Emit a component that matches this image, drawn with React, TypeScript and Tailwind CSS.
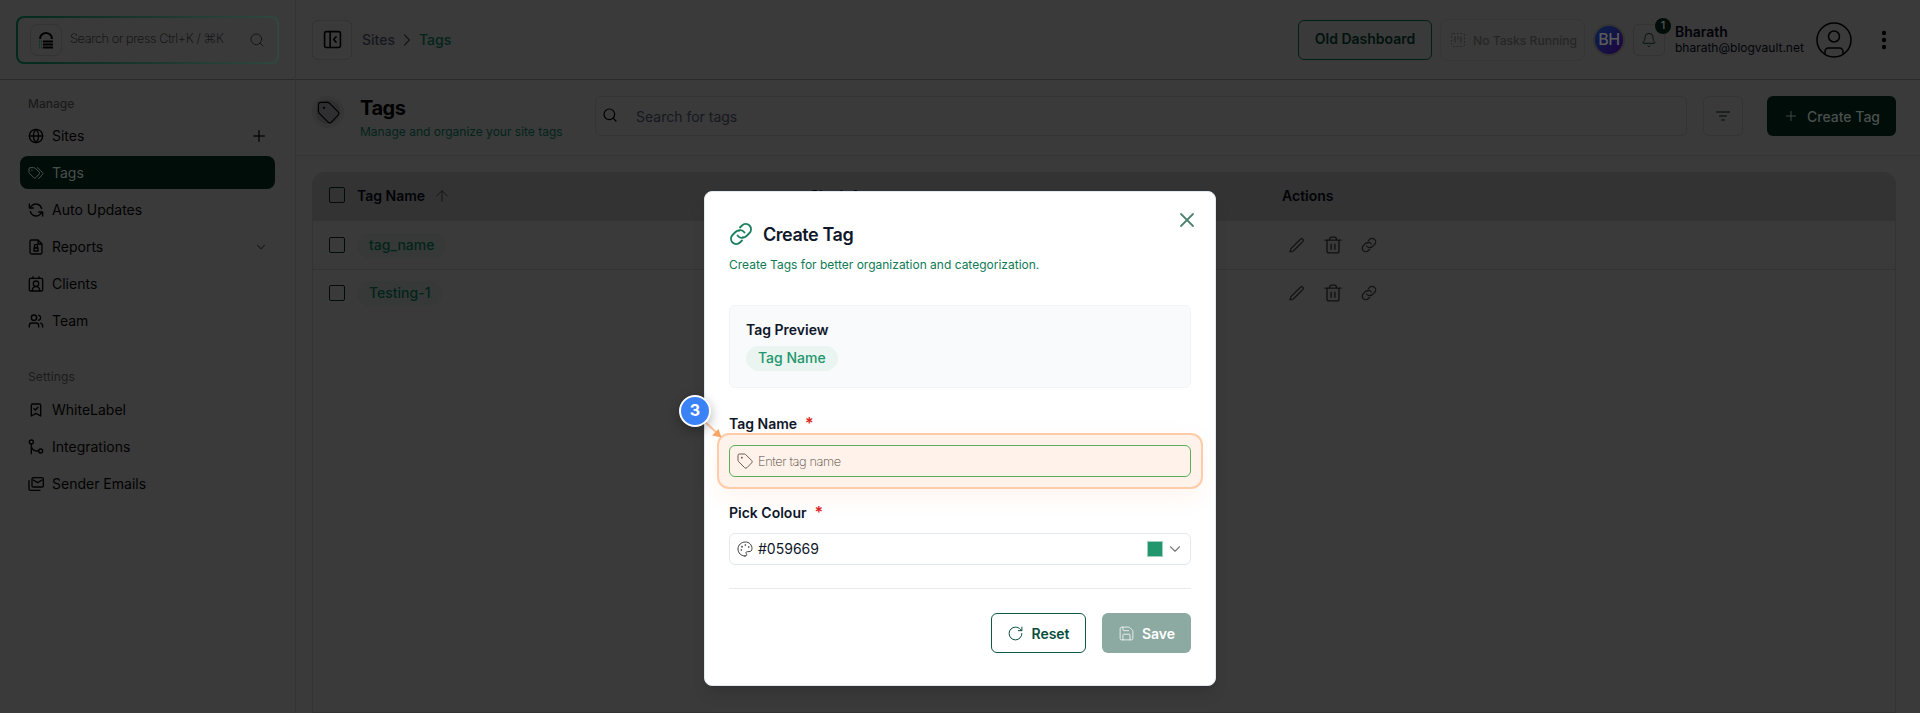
import type { ReactNode } from "react";
import {
  ArrowUp,
  Bell,
  BookmarkCheck,
  ChevronDown,
  ChevronRight,
  Globe,
  Plus,
  RotateCw,
  Save,
  Search,
  Users,
  X,
} from "lucide-react";

type IconProps = { size?: number; className?: string; strokeWidth?: number };

function Svg({ size = 16, className, strokeWidth = 2, children }: IconProps & { children: ReactNode }) {
  return (
    <svg
      width={size}
      height={size}
      viewBox="0 0 24 24"
      fill="none"
      stroke="currentColor"
      strokeWidth={strokeWidth}
      strokeLinecap="round"
      strokeLinejoin="round"
      className={className}
    >
      {children}
    </svg>
  );
}

const TagIcon = (props: IconProps) => (
  <Svg {...props}>
    <path d="M1.500 3.500a2 2 0 0 1 2-2H11a3 3 0 0 1 2 .8l9 9a2.500 2.500 0 0 1 0 3.500L15 22a2.500 2.500 0 0 1-3.500 0l-9-9a3 3 0 0 1-1-2z" />
    <path d="M6.500 7h1.500M7.250 6.250v1.500" />
  </Svg>
);

const TagsIcon = (props: IconProps) => (
  <Svg {...props}>
    <path d="M1.500 5.500A1.500 1.500 0 0 1 3 4h5.500a3 3 0 0 1 2 .8l6.500 6a1.800 1.800 0 0 1 0 2.600l-5.500 5.800a1.800 1.800 0 0 1-2.600 0l-6.500-6.500a3 3 0 0 1-.9-2z" />
    <path d="m14 4 8 7.500a1.800 1.800 0 0 1 0 2.500l-6 6.500M5.500 8h.6" />
  </Svg>
);

const LinkIcon = (props: IconProps) => (
  <Svg {...props}>
    <path d="M10.500 8.500a5 5 0 0 0-4 1.500l-3 3a5 5 0 0 0 7.500 7.500l2-2" />
    <path d="M13.500 15.500a5 5 0 0 0 4-1.500l3-3A5 5 0 0 0 13 3.500l-2 2" />
    <path d="M8.500 13.500c1.500 2 4 2.600 5.500 2M15.500 10.500c-1.500-2-4-2.600-5.500-2" />
  </Svg>
);

const PencilIcon = (props: IconProps) => (
  <Svg {...props}>
    <path d="M3 17.500 17.500 3a2.500 2.500 0 0 1 3.500 3.500L6.500 21 1.500 22.500z" />
  </Svg>
);

const TrashIcon = (props: IconProps) => (
  <Svg {...props}>
    <path d="M1.500 5.500h21M4 5.500V20a2.500 2.500 0 0 0 2.500 2.500h11A2.500 2.500 0 0 0 20 20V5.500M7.500 5.500V4A2.500 2.500 0 0 1 10 1.500h4A2.500 2.500 0 0 1 16.500 4v1.500M9.500 11v6.500M14.500 11v6.500" />
  </Svg>
);

const SyncIcon = (props: IconProps) => (
  <Svg {...props}>
    <path d="M2 3v6h6M22 21v-6h-6M3.500 14a9 9 0 0 0 15 4.500L22 15M20.500 10a9 9 0 0 0-15-4.500L2 9" />
  </Svg>
);

const ReportIcon = (props: IconProps) => (
  <Svg {...props}>
    <path d="M5 1.500h10l6 6V20a2.500 2.500 0 0 1-2.500 2.500h-13A2.500 2.500 0 0 1 3 20V4a2.500 2.500 0 0 1 2-2.500zM15 2v5.500h5.500" />
    <circle cx="12" cy="10.500" r="2.500" />
    <path d="M9 13.500h6V18H9z" />
  </Svg>
);

const ClientIcon = (props: IconProps) => (
  <Svg {...props}>
    <rect x="2" y="3.500" width="20" height="19" rx="2" />
    <path d="M7.500 1v2.500M16.500 1v2.500M6.500 22c0-4 2-6 5.500-6s5.500 2 5.500 6" />
    <circle cx="12" cy="11.500" r="4" />
  </Svg>
);

const BranchIcon = (props: IconProps) => (
  <Svg {...props}>
    <circle cx="5" cy="4.500" r="3" />
    <circle cx="19" cy="18" r="3" />
    <path d="M5 7.500V22M5 10c0 5 4 8 11 8" />
  </Svg>
);

const MailsIcon = (props: IconProps) => (
  <Svg {...props}>
    <rect x="6" y="2.500" width="17" height="14" rx="2" />
    <path d="m8 6 6.500 4L21 6M1.500 7v12A2.500 2.500 0 0 0 4 21.500h14" />
  </Svg>
);

const PaletteIcon = (props: IconProps) => (
  <Svg {...props}>
    <path d="M12 22.500C6 22.500 1.500 18 1.500 12S6.500 1.500 12.500 1.500 22.500 6 22.500 11.500c0 3-2 4.500-4.500 4.500h-2.500c-2 0-2.500 1.500-1.500 3s1 3.500-2 3.500z" />
    <path d="M6.500 13.500h.1M7.500 8.500h.1M12.500 6h.1M17.500 9h.1" strokeWidth={2.5} />
  </Svg>
);

const PanelIcon = (props: IconProps) => (
  <Svg {...props}>
    <rect x="2" y="2" width="20" height="20" rx="2" />
    <path d="M9 2v20M16.500 8.500 13.500 12l3 3.500" />
  </Svg>
);

function NavItem({ icon, label, active, right }: { icon: ReactNode; label: string; active?: boolean; right?: ReactNode }) {
  return (
    <div
      className={`flex h-[33px] items-center rounded-lg pr-[7px] pl-2 text-sm ${
        active ? "bg-[#010d09] text-[#4b504e]" : "text-[#020202]"
      }`}
    >
      <span className="flex w-6 shrink-0 items-center">{icon}</span>
      <span className="flex-1">{label}</span>
      {right}
    </div>
  );
}

function Sidebar() {
  return (
    <aside className="flex w-[296px] shrink-0 flex-col border-r border-[#333]">
      <div className="h-20 border-b border-[#2a2a2a] px-4 pt-4">
        <div className="h-12 w-[263px] rounded-lg bg-linear-to-r from-[#03281c] to-[#30483f] p-0.5">
          <div className="flex h-full items-center rounded-md bg-[#3a3a3a] pr-3 pl-3">
            <div className="flex size-8 items-center justify-center rounded-lg border border-[#333]">
              <svg width="14" height="17" viewBox="0 0 14 17" fill="none">
                <path d="M1.200 7V6a5.800 5 0 0 1 11.600 0v1" stroke="#000" strokeWidth="2" />
                <path d="M4 9.500h10M4 12.500h10M4 15.500h10" stroke="#000" strokeWidth="2" />
                <path d="M0 9.500h3M0 12.500h3M0 15.500h3" stroke="#0b3527" strokeWidth="2" strokeDasharray="1 1" />
              </svg>
            </div>
            <span className="ml-2 flex-1 pb-0.5 text-[12.800px] font-extralight tracking-[-0.031em] whitespace-nowrap text-[#080808]">
              Search or press Ctrl+K / ⌘K
            </span>
            <Search size={16} strokeWidth={1.5} className="text-[#161616]" />
          </div>
        </div>
      </div>
      <div className="px-5 pt-4">
        <p className="h-[23px] pl-2 text-xs leading-4 font-medium text-[#1b1b1b]">Manage</p>
        <div className="flex flex-col gap-1">
          <NavItem icon={<Globe size={16} />} label="Sites" right={<Plus size={18} className="text-[#0d0d0d]" />} />
          <NavItem icon={<TagsIcon strokeWidth={1.5} />} label="Tags" active />
          <NavItem icon={<SyncIcon />} label="Auto Updates" />
          <NavItem
            icon={<ReportIcon />}
            label="Reports"
            right={<ChevronDown size={14} strokeWidth={1.8} className="text-[#151515]" />}
          />
          <NavItem icon={<ClientIcon />} label="Clients" />
          <NavItem icon={<Users size={16} />} label="Team" />
        </div>
        <p className="mt-8 h-6 pl-2 text-xs leading-4 tracking-[0.01em] text-[#1b1b1b]">Settings</p>
        <div className="flex flex-col gap-1">
          <NavItem icon={<BookmarkCheck size={16} />} label="WhiteLabel" />
          <NavItem icon={<BranchIcon />} label="Integrations" />
          <NavItem icon={<MailsIcon />} label="Sender Emails" />
        </div>
      </div>
    </aside>
  );
}

function Topbar() {
  return (
    <header className="flex h-20 items-center border-b border-[#2a2a2a] pl-4 text-sm">
      <div className="flex size-10 items-center justify-center rounded-md border border-[#333]">
        <PanelIcon size={19} className="text-black" />
      </div>
      <nav className="ml-2.5 flex items-center font-medium">
        <span className="text-[#16181f]">Sites</span>
        <ChevronRight size={20} strokeWidth={1.5} className="mr-0.5 ml-0.5 text-[#16181f]" />
        <span className="text-[#02241a]">Tags</span>
      </nav>

      <div className="ml-auto flex items-center">
        <button className="h-10 w-[134px] rounded-md border border-[#021f16] pb-0.5 font-semibold text-[#01130e]">
          Old Dashboard
        </button>
        <div className="ml-2 flex h-[42px] w-[145px] items-center rounded-lg border border-[#363636] pl-2.5 text-[#222]">
          <svg width="14" height="14" viewBox="0 0 14 14" fill="none" stroke="currentColor">
            <rect x="0.500" y="0.500" width="13" height="13" rx="2" strokeDasharray="1.500 2" />
            <path d="M4 3.500v6M7 3.500v3M10 3.500v6" />
          </svg>
          <span className="ml-2 pt-[3px] text-[12.100px] font-medium whitespace-nowrap text-[#262626]">
            No Tasks Running
          </span>
        </div>
        <div className="ml-2 flex size-8 items-center justify-center rounded-full border-2 border-[#333] bg-linear-to-br from-[#0c1c4a] from-20% to-[#1a0540] to-90% pb-0.5 text-base font-medium tracking-tight text-[#5a5a5a]">
          BH
        </div>
        <div className="relative ml-2 flex size-8 items-center justify-center rounded-md border border-[#333]">
          <Bell size={16} strokeWidth={1.5} className="text-[#021711]" />
          <span className="absolute -top-[7px] -right-[7px] flex size-4 items-center justify-center rounded-full bg-[#010d09] text-[11px] font-medium text-[#555]">
            1
          </span>
        </div>
        <div className="ml-2.5 w-[129px] whitespace-nowrap text-[#020308]">
          <p className="text-sm leading-[14px] font-semibold">Bharath</p>
          <p className="mt-0.5 text-xs leading-[14px]">bharath@blogvault.net</p>
        </div>
        <svg width="36" height="36" viewBox="0 0 36 36" fill="none" stroke="#000" strokeWidth="1.500" className="ml-3">
          <circle cx="18" cy="18" r="17" />
          <circle cx="18" cy="14.500" r="5.500" />
          <path d="M9 32v-2.500a3.500 3.500 0 0 1 3.500-3.500h11a3.500 3.500 0 0 1 3.500 3.500V32" />
        </svg>
        <svg width="6" height="20" viewBox="0 0 6 20" className="mr-[33px] ml-[29px]">
          <circle cx="3" cy="3" r="2.200" />
          <circle cx="3" cy="10" r="2.200" />
          <circle cx="3" cy="17" r="2.200" />
        </svg>
      </div>
    </header>
  );
}

function PageHeader() {
  return (
    <div className="flex h-[76px] border-b border-[#333] pt-4 pr-6 pl-4 text-sm">
      <div className="flex size-8 items-center justify-center rounded-full bg-[#363636]">
        <div className="flex size-6 items-center justify-center rounded-full bg-[#2f2f31]">
          <TagIcon size={23} strokeWidth={1.2} className="text-black" />
        </div>
      </div>
      <div className="ml-4 w-[235px] whitespace-nowrap">
        <h1 className="text-xl leading-6 font-bold tracking-tight text-black">Tags</h1>
        <p className="mt-1 text-xs leading-4 text-[#02241a]">Manage and organize your site tags</p>
      </div>
      <div className="flex h-10 flex-1 items-center rounded-md border border-[#343434] pl-2">
        <Search size={16} strokeWidth={1.8} className="-mt-0.5 -ml-0.5 text-black" />
        <span className="ml-[18px] pt-0.5 text-[#16181f]">Search for tags</span>
      </div>
      <div className="ml-4 flex size-10 flex-col items-center justify-center gap-0.5 rounded-md border border-[#343434]">
        <span className="h-0.5 w-3.5 rounded bg-[#1c2120]" />
        <span className="h-0.5 w-2 rounded bg-[#1c2120]" />
        <span className="h-0.5 w-1 rounded bg-[#1c2120]" />
      </div>
      <button className="ml-6 flex h-10 w-[129px] items-center justify-center rounded-md bg-[#010d09] pt-0.5 font-medium text-[#4b504e]">
        <Plus size={16} strokeWidth={1.3} className="-mt-0.5 mr-2" />
        Create Tag
      </button>
    </div>
  );
}

const checkbox = "size-4 shrink-0 rounded-xs border border-[#020d0a]";

function TagsTable() {
  return (
    <div className="mt-4 mr-6 ml-4 flex-1 rounded-t-xl border border-[#333] text-sm">
      <div className="flex h-12 items-start rounded-t-xl bg-[#333] pt-[13px] pl-4 leading-5 font-semibold text-[#020308]">
        <span className={`mt-px ${checkbox}`} />
        <span className="ml-3 flex w-[453px] items-center">
          Tag Name
          <ArrowUp size={18} strokeWidth={1.3} className="ml-2 text-[#161616]" />
        </span>
        <span className="w-[472px]">Site Info</span>
        <span>Actions</span>
      </div>
      {["tag_name", "Testing-1"].map((name, i) => (
        <div key={name} className={`flex items-center pl-4 ${i === 0 ? "h-[49px] border-b border-[#333]" : "h-[46px]"}`}>
          <span className={checkbox} />
          <span className="ml-3 flex w-[932px]">
            <span className="flex h-[25px] items-center rounded-full bg-[#363938] px-3 font-medium text-[#02241a]">
              {name}
            </span>
          </span>
          <span className="flex items-center gap-[19px] text-[#111]">
            <PencilIcon size={16} strokeWidth={1.8} />
            <TrashIcon size={18} strokeWidth={1.8} />
            <LinkIcon size={16} strokeWidth={1.8} />
          </span>
        </div>
      ))}
    </div>
  );
}

function FieldLabel({ children }: { children: ReactNode }) {
  return (
    <p className="text-sm leading-5 font-semibold text-[#0f172a]">
      {children}
      <span className="ml-2 text-base leading-5 text-[#dc2626]">*</span>
    </p>
  );
}

function CreateTagModal() {
  return (
    <div className="absolute top-[191px] left-[704px] flex h-[495px] w-[512px] flex-col rounded-lg border border-[#e2e8f0] bg-white px-6 text-sm shadow-lg">
      <X size={24} strokeWidth={1.8} className="absolute top-4 right-4 text-[#4f8171]" />
      <div className="mt-[31px] flex h-[22px] items-center">
        <LinkIcon size={24} strokeWidth={1.8} className="text-[#1c7f5c]" />
        <h2 className="ml-2.5 pt-px text-lg leading-none font-semibold tracking-tight text-[#0f172a]">Create Tag</h2>
      </div>
      <p className="mt-3 text-xs leading-4 text-[#0f7a54]">Create Tags for better organization and categorization.</p>

      <div className="mt-8 h-[83px] rounded-md border border-[#f1f5f9] bg-[#f8fafc] px-4 pt-3.5">
        <p className="leading-5 font-semibold text-[#0f172a]">Tag Preview</p>
        <div className="mt-1.5 flex">
          <span className="flex h-[25px] items-center rounded-full bg-[#eaf4f0] px-3 pb-px font-medium text-[#22966d]">
            Tag Name
          </span>
        </div>
      </div>

      <div className="mt-[25px]">
        <FieldLabel>Tag Name</FieldLabel>
        <div className="mt-[11px] flex h-8 items-center rounded-md border border-[#4bb462] pl-[7px]">
          <TagIcon size={16} strokeWidth={1.4} className="-mt-px text-[#55504e]" />
          <span className="ml-[5px] pt-0.5 text-[12.800px] font-extralight tracking-[-0.031em] text-[#444]">
            Enter tag name
          </span>
        </div>
      </div>

      <div className="mt-[25px]">
        <FieldLabel>Pick Colour</FieldLabel>
        <div className="mt-2.5 flex h-8 items-center rounded-md border border-[#e2e8f0] pr-1.5 pl-[7px]">
          <PaletteIcon size={16} strokeWidth={1.4} className="-mt-px text-[#333]" />
          <span className="ml-[5px] flex-1 text-[#0f172a]">#059669</span>
          <span className="-mt-px size-4 border border-[#9fcfbd] bg-[#22966d]" />
          <ChevronDown size={18} strokeWidth={1.5} className="-mt-px ml-[3px] text-[#777]" />
        </div>
      </div>

      <div className="mt-[23px] flex justify-end gap-4 border-t border-[#e8eaed] pt-6 font-semibold">
        <button className="flex h-10 w-[95px] items-center justify-center rounded-md border border-[#0b5a41] pt-px text-[#064e3b]">
          <RotateCw size={17} strokeWidth={1.4} className="-mt-px mr-[7px]" />
          Reset
        </button>
        <button className="flex h-10 w-[89px] items-center justify-center rounded-md bg-[#8daaa2] pt-px text-white">
          <Save size={17} strokeWidth={1.4} className="-mt-px mr-[7px] opacity-80" />
          Save
        </button>
      </div>
    </div>
  );
}

// Numbered step marker with the outlined target field
function StepCallout() {
  return (
    <>
      <div className="absolute top-[433px] left-[717px] h-14 w-[486px] rounded-xl border-2 border-[#fdba8c]/70 bg-[#f97316]/9 shadow-[0_8px_24px_rgba(249,115,22,0.07)]" />
      <svg width="30" height="30" viewBox="0 0 30 30" className="absolute top-[415px] left-[699px]">
        <path d="M5 6l13 12" stroke="#fbc7a2" strokeWidth="2" />
        <path d="M13 20.500 19.500 14 22.500 22.500z" fill="#f9a566" />
      </svg>
      <div className="absolute top-[395px] left-[679px] flex size-8 items-center justify-center rounded-full border-2 border-white bg-[#3b82f6] pb-0.5 text-base font-bold text-white shadow-[0_4px_12px_rgba(0,0,0,0.3)]">
        3
      </div>
    </>
  );
}

export default function App() {
  return (
    <div className="relative flex h-[713px] w-[1920px] overflow-hidden bg-[#3a3a3a] font-[Inter,'Noto_Sans',sans-serif]">
      <Sidebar />
      <main className="flex flex-1 flex-col">
        <Topbar />
        <PageHeader />
        <TagsTable />
      </main>
      <CreateTagModal />
      <StepCallout />
    </div>
  );
}
